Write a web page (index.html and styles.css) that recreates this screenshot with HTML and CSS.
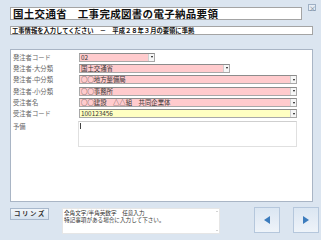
FILE: index.html
```html
<!DOCTYPE html>
<html lang="ja">
<head>
    <meta charset="UTF-8">
    <title>工事情報入力</title>
    <link rel="stylesheet" href="styles.css">
</head>
<body>
    <div class="screen">

        <!-- タイトル -->
        <div class="header">
            <div class="title">国土交通省　工事完成図書の電子納品要領</div>
            <button class="close">×</button>
        </div>
        <div class="subtitle">工事情報を入力してください　－　平成２８年３月の要領に準拠</div>

        <!-- 入力欄 -->
        <div class="panel">
            <div class="form">
                <label>発注者コード</label>
                <div class="field pink w1"><span>02</span><i class="drop"></i></div>

                <label>発注者-大分類</label>
                <div class="field pink w2"><span>国土交通省</span><i class="drop"></i></div>

                <label>発注者-中分類</label>
                <div class="field pink w3"><span>○○地方整備局</span><i class="drop"></i></div>

                <label>発注者-小分類</label>
                <div class="field pink w3"><span>○○事務所</span><i class="drop"></i></div>

                <label>受注者名</label>
                <div class="field pink w3"><span>○○建設　△△組　共同企業体</span><i class="drop"></i></div>

                <label>受注者コード</label>
                <div class="field yellow w3"><span>100123456</span><i class="drop"></i></div>

                <label class="memo-label">予備</label>
                <div class="memo"><span class="caret"></span></div>
            </div>
        </div>

        <!-- 下部 -->
        <div class="footer">
            <button class="corins">コリンズ</button>
            <div class="help">
                <p>全角文字/半角英数字　任意入力</p>
                <p>特記事項がある場合に入力して下さい。</p>
                <div class="help-scroll"><i class="up"></i><i class="down"></i></div>
            </div>
            <div class="nav">
                <button class="nav-btn"><i class="tri-left"></i></button>
                <button class="nav-btn"><i class="tri-right"></i></button>
            </div>
        </div>

    </div>
</body>
</html>
```

FILE: styles.css
```css
* {
    margin: 0;
    padding: 0;
    box-sizing: border-box;
}

body {
    font-family: "Noto Sans CJK JP", sans-serif;
    background: #dbe5f0;
    width: 321px;
    height: 240px;
    overflow: hidden;
}

button {
    font-family: inherit;
    cursor: pointer;
}

/* ---------------------------------タイトル---------------------------------- */

.header {
    display: flex;
    align-items: flex-start;
    gap: 6px;
    padding: 4px 0 0 10px;
}

.title {
    width: 292px;
    height: 13px;
    margin-top: 3px;
    padding-left: 2px;
    background: #fff;
    border: 1px solid #a4a4a4;
    font-size: 10.5px;
    font-weight: bold;
    letter-spacing: 0.3px;
    line-height: 11px;
    color: #111;
    white-space: nowrap;
    overflow: hidden;
}

.close {
    width: 8px;
    height: 7px;
    border: 1px solid #9fb0c4;
    background: #e6edf5;
    color: #6a7a8c;
    font-size: 7px;
    line-height: 4px;
}

.subtitle {
    width: 303px;
    height: 9px;
    margin: 6px 0 0 10px;
    padding-left: 1px;
    background: #fff;
    border: 1px solid #a4a4a4;
    font-size: 6.3px;
    font-weight: bold;
    line-height: 7px;
    color: #111;
    white-space: nowrap;
    overflow: hidden;
}

/* ---------------------------------入力欄---------------------------------- */

.panel {
    width: 303px;
    height: 153px;
    margin: 14px 0 0 10px;
    background: #fff;
    border: 1px solid #a9b5c5;
    padding: 2.5px 0 0 2px;
}

.form {
    display: grid;
    grid-template-columns: 66px 1fr;
    row-gap: 2.4px;
    align-items: center;
}

.form label {
    font-size: 6.3px;
    line-height: 9px;
    color: #666;
    white-space: nowrap;
}

.field {
    height: 9px;
    display: flex;
    align-items: center;
    border: 1px solid #a8a8a8;
    border-top-color: #8c8c8c;
    font-size: 6.4px;
    color: #333;
}

.field span {
    flex: 1;
    padding-left: 1px;
    line-height: 7px;
    white-space: nowrap;
    overflow: hidden;
}

.pink   { background: #ffcbcd; }
.yellow { background: #ffffc2; }

.w1 { width: 76px; }
.w2 { width: 151px; }
.w3 { width: 218px; }

/* プルダウンの矢印 */
.drop {
    width: 6px;
    height: 7px;
    background: #f6f6f6;
    border-left: 1px solid #d0d0d0;
    display: flex;
    align-items: center;
    justify-content: center;
}
.drop::before {
    content: "";
    border-left: 1.5px solid transparent;
    border-right: 1.5px solid transparent;
    border-top: 2px solid #111;
}

.memo-label {
    align-self: start;
    padding-top: 1px;
}

.memo {
    width: 219px;
    height: 26px;
    margin-left: -1px;
    border: 1px solid #e0e0e0;
    border-top-color: #cfcfcf;
    padding: 1px 0 0 1px;
}

.caret {
    display: block;
    width: 1px;
    height: 6px;
    background: #444;
}

/* ---------------------------------下部---------------------------------- */

.footer {
    display: flex;
    align-items: flex-start;
    margin-top: 5px;
    padding-left: 10px;
}

.corins {
    width: 39px;
    height: 12px;
    margin-top: 1px;
    border: 1px solid #a8b8cc;
    background: linear-gradient(#f2f6fa, #d6e2ef);
    font-size: 6.4px;
    font-weight: bold;
    letter-spacing: 1.6px;
    line-height: 10px;
    color: #333;
    padding-left: 1px;
}

.help {
    position: relative;
    width: 158px;
    height: 26px;
    margin-left: 13px;
    margin-top: 1px;
    background: #fff;
    border: 1px solid #e6e6e6;
    padding: 1px 0 0 1px;
    font-size: 5.6px;
    line-height: 6.6px;
    color: #333;
}

.help p {
    white-space: nowrap;
}

/* スクロールバー */
.help-scroll {
    position: absolute;
    top: 0;
    right: 0;
    bottom: 0;
    width: 5px;
    display: flex;
    flex-direction: column;
    justify-content: space-between;
    align-items: center;
    padding: 2px 0;
}
.help-scroll i {
    border-left: 1px solid transparent;
    border-right: 1px solid transparent;
}
.help-scroll .up   { border-bottom: 1px solid #aaa; }
.help-scroll .down { border-top: 1px solid #aaa; }

.nav {
    display: flex;
    gap: 13px;
    margin-left: 34px;
}

.nav-btn {
    width: 26px;
    height: 26px;
    border: 1px solid #b5c7dc;
    background: linear-gradient(#dbe6f2, #eef3f9);
    display: flex;
    align-items: center;
    justify-content: center;
}

.tri-left,
.tri-right {
    border-top: 4px solid transparent;
    border-bottom: 4px solid transparent;
}
.tri-left  { border-right: 6px solid #3d7cbd; }
.tri-right { border-left: 6px solid #3d7cbd; }
```
